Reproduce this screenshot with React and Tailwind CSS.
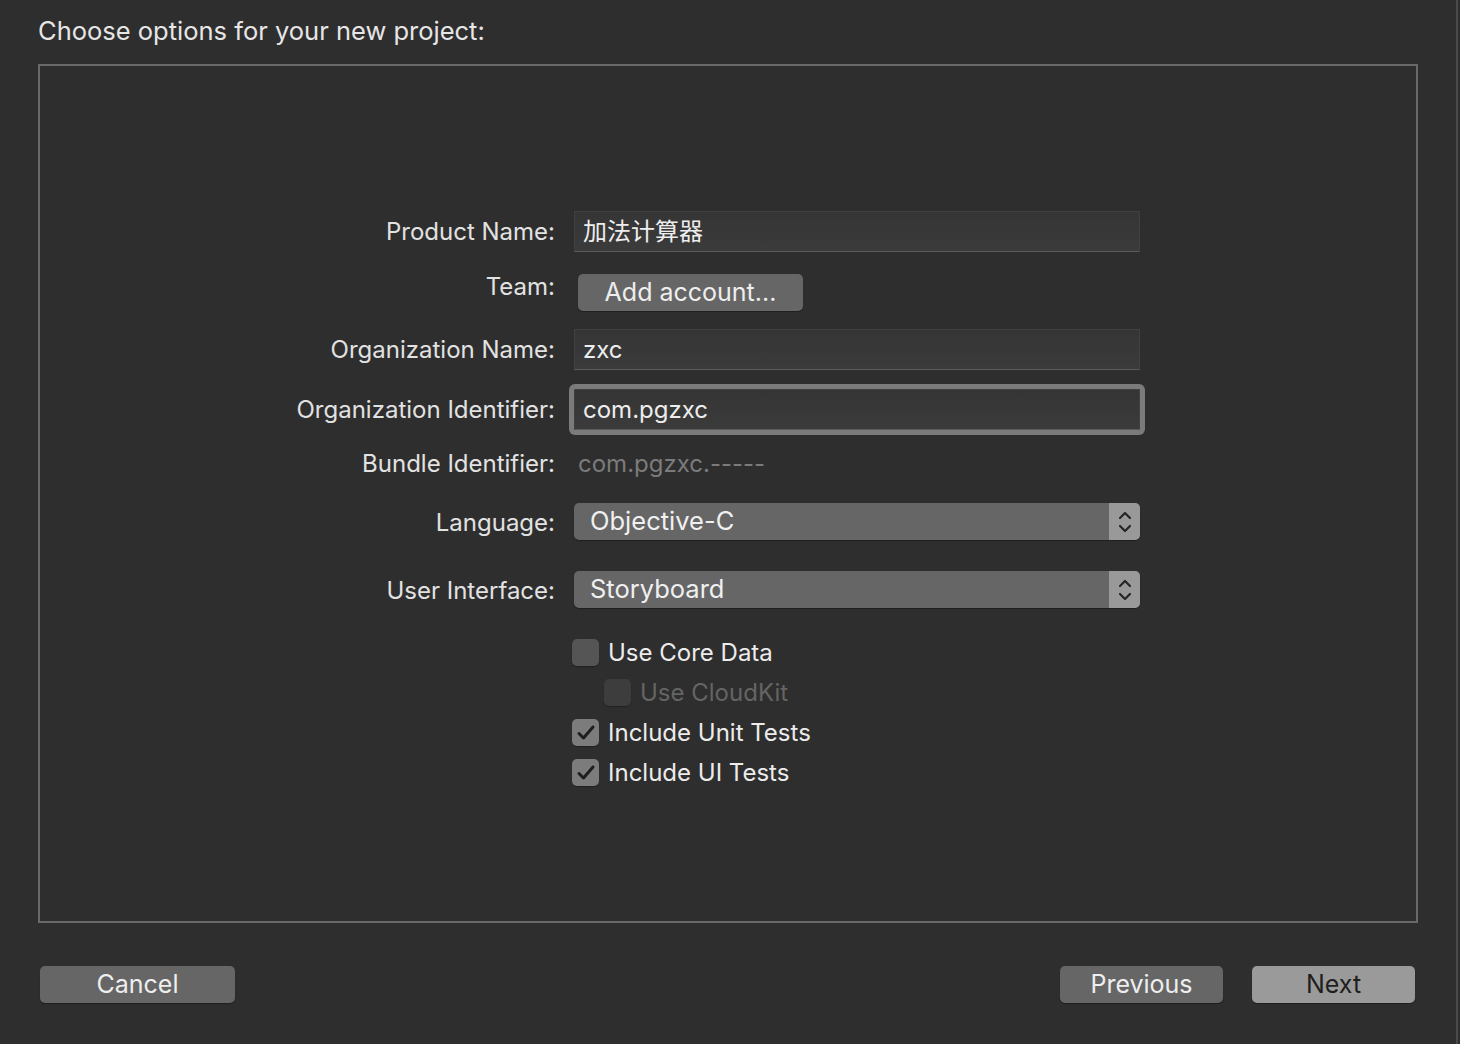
import React from 'react';

const font = { fontFamily: 'Inter, "Noto Sans CJK SC", sans-serif' };

const Label = ({ children, className = '' }) => (
  <div className={`w-[515px] shrink-0 text-right text-[24px] leading-[30px] text-[#e2e2e2] ${className}`}>
    {children}
  </div>
);

const TextField = ({ value, focused }) => (
  <div
    className={`ml-[19px] w-[566px] h-[41px] flex items-center px-[8px] text-[24px] text-[#ededed] bg-gradient-to-b from-[#353535] to-[#3b3b3b] border border-[#404040] border-b-[#5c5c5c] ${
      focused ? 'rounded-[2px] shadow-[0_0_0_5px_#7b7b7b]' : ''
    }`}
  >
    {value}
  </div>
);

const Chevrons = () => (
  <svg width="14" height="26" viewBox="0 0 14 26" fill="none" stroke="#262626" strokeWidth="2.2" strokeLinecap="round" strokeLinejoin="round">
    <path d="M2 9 L7 4 L12 9" />
    <path d="M2 17 L7 22 L12 17" />
  </svg>
);

const Popup = ({ value }) => (
  <div className="ml-[19px] w-[566px] h-[37px] flex rounded-[5px] overflow-hidden bg-[#666666] shadow-[0_1px_1px_rgba(0,0,0,0.35)]">
    <div className="flex-1 flex items-center pl-[16px] text-[25.5px] text-[#f0f0f0]">{value}</div>
    <div className="w-[31px] flex items-center justify-center bg-[#999999]">
      <Chevrons />
    </div>
  </div>
);

const Check = () => (
  <svg width="20" height="18" viewBox="0 0 20 18" fill="none" stroke="#1e1e1e" strokeWidth="3" strokeLinecap="round" strokeLinejoin="round">
    <path d="M3 9.5 L7.5 14 L17 3" />
  </svg>
);

const Checkbox = ({ label, checked, disabled, indent }) => (
  <div className={`flex items-center h-[27px] ${indent ? 'ml-[32px]' : ''}`}>
    <div
      className={`w-[27px] h-[27px] rounded-[5px] flex items-center justify-center ${
        disabled ? 'bg-[#3d3d3d]' : checked ? 'bg-[#7c7c7c]' : 'bg-[#555555]'
      } shadow-[0_1px_1px_rgba(0,0,0,0.3)]`}
    >
      {checked && <Check />}
    </div>
    <span className={`ml-[9px] text-[24px] leading-[30px] ${disabled ? 'text-[#646464]' : 'text-[#ececec]'}`}>{label}</span>
  </div>
);

const Button = ({ children, primary, className = '' }) => (
  <button
    className={`h-[37px] rounded-[5px] text-[25px] flex items-center justify-center shadow-[0_1px_1px_rgba(0,0,0,0.35)] ${
      primary ? 'bg-[#9a9a9a] text-[#1f1f1f]' : 'bg-[#666666] text-[#eeeeee]'
    } ${className}`}
  >
    {children}
  </button>
);

export default function App() {
  return (
    <div className="w-[1460px] h-[1044px] flex bg-[#2e2e2e] overflow-hidden" style={font}>
      <div className="w-[1456px] flex flex-col pt-[16px]">
        {/* Title */}
        <div className="pl-[38px] text-[25.5px] leading-[30px] text-[#e6e6e6]">Choose options for your new project:</div>

        {/* Options box */}
        <div className="ml-[38px] mt-[18px] w-[1380px] h-[859px] border-2 border-[#696969] pt-[145px] flex flex-col">
          <div className="flex items-start">
            <Label className="mt-[6px]">Product Name:</Label>
            <TextField value="加法计算器" />
          </div>

          <div className="flex items-start mt-[19px]">
            <Label className="mt-[1px]">Team:</Label>
            <Button className="ml-[23px] mt-[3px] w-[225px] text-[24px]">Add account...</Button>
          </div>

          <div className="flex items-start mt-[18px]">
            <Label className="mt-[6px]">Organization Name:</Label>
            <TextField value="zxc" />
          </div>

          <div className="flex items-start mt-[19px]">
            <Label className="mt-[6px]">Organization Identifier:</Label>
            <TextField value="com.pgzxc" focused />
          </div>

          <div className="flex items-start mt-[19px]">
            <Label>Bundle Identifier:</Label>
            <div className="ml-[23px] text-[24px] leading-[30px] text-[#7b7b7b]">com.pgzxc.-----</div>
          </div>

          <div className="flex items-start mt-[24px]">
            <Label className="mt-[5px]">Language:</Label>
            <Popup value="Objective-C" />
          </div>

          <div className="flex items-start mt-[31px]">
            <Label className="mt-[5px]">User Interface:</Label>
            <Popup value="Storyboard" />
          </div>

          <div className="ml-[532px] mt-[31px] flex flex-col gap-[13px]">
            <Checkbox label="Use Core Data" />
            <Checkbox label="Use CloudKit" disabled indent />
            <Checkbox label="Include Unit Tests" checked />
            <Checkbox label="Include UI Tests" checked />
          </div>
        </div>

        {/* Footer buttons */}
        <div className="mt-[43px] flex items-center pl-[40px] pr-[41px]">
          <Button className="w-[195px]">Cancel</Button>
          <div className="flex-1" />
          <Button className="w-[163px]">Previous</Button>
          <Button primary className="ml-[29px] w-[163px]">Next</Button>
        </div>
      </div>
      <div className="w-[2px] bg-[#4a4a4a]" />
      <div className="flex-1" />
    </div>
  );
}
